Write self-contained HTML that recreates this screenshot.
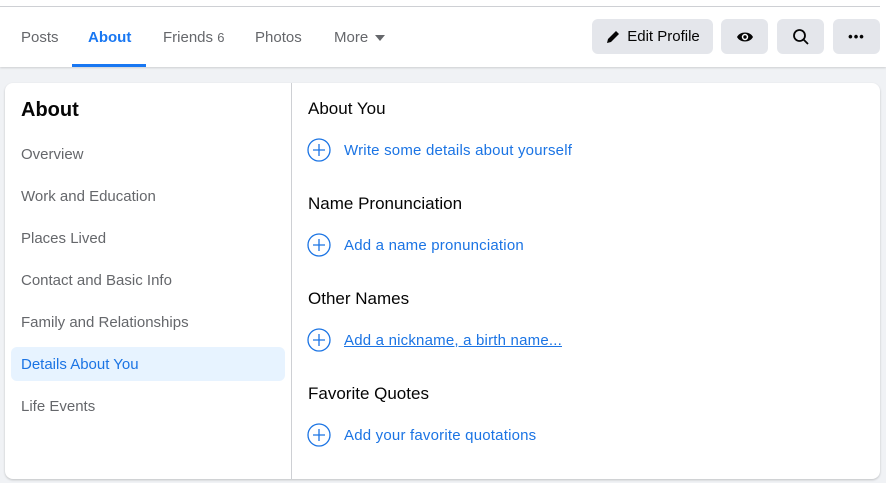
<!DOCTYPE html><html><head><style>
body{margin:0;width:886px;height:483px;background:#f0f2f5;font-family:"Liberation Sans",sans-serif;position:relative;overflow:hidden}
.hdr{position:absolute;left:0;top:0;width:886px;height:67px;background:#fff;box-shadow:0 1px 2px rgba(0,0,0,.15)}
.line{position:absolute;left:0;top:6px;width:880px;height:1px;background:#ced0d4}
.tab{position:absolute;top:29px;font-size:15px;color:#65676b}
.btn{position:absolute;top:19px;height:35px;background:#e4e6eb;border-radius:6px;display:flex;align-items:center;justify-content:center;font-size:15px;color:#050505}
.card{position:absolute;left:5px;top:83px;width:875px;height:396px;background:#fff;border-radius:8px;box-shadow:0 1px 2px rgba(0,0,0,.2)}
.div{position:absolute;left:286px;top:0;width:1px;height:396px;background:#ced0d4}
.side{position:absolute;left:16px;font-size:15px;color:#65676b;top:1px}
.h{position:absolute;left:303px;font-size:17px;color:#050505}
.lk{position:absolute;left:302px;font-size:15px;color:#1b74e4;display:flex;align-items:center;letter-spacing:.2px}
.lk svg{margin-right:13px}
</style></head><body>
<div class="hdr"><div class="line"></div>
<div class="tab" style="left:21px">Posts</div>
<div class="tab" style="left:88px;color:#1877f2;font-weight:bold">About</div>
<div style="position:absolute;left:72px;top:64px;width:74px;height:3px;background:#1877f2"></div>
<div class="tab" style="left:163px">Friends <span style="font-size:13px">6</span></div>
<div class="tab" style="left:255px">Photos</div>
<div class="tab" style="left:334px">More <svg width="12" height="8" viewBox="0 0 12 8" style="margin-left:2px"><path d="M1 1h10L6 7z" fill="#65676b"/></svg></div>
<div class="btn" style="left:592px;width:121px"><svg width="16" height="16" viewBox="0 0 16 16" style="margin-right:6px"><path d="M2 14l1-4 8-8 3 3-8 8z" fill="#050505"/></svg>Edit Profile</div>
<div class="btn" style="left:721px;width:47px"><svg width="18" height="12" viewBox="0 0 18 12"><path d="M1 6C4 0 14 0 17 6C14 12 4 12 1 6Z" fill="#050505"/><circle cx="9" cy="6" r="3.2" fill="#fff"/><circle cx="9" cy="6" r="1.7" fill="#050505"/></svg></div>
<div class="btn" style="left:777px;width:47px"><svg width="18" height="18" viewBox="0 0 18 18"><circle cx="7.5" cy="7.5" r="5.5" stroke="#050505" stroke-width="1.8" fill="none"/><path d="M11.5 11.5L16 16" stroke="#050505" stroke-width="1.8"/></svg></div>
<div class="btn" style="left:833px;width:47px;font-weight:bold;font-size:13px;letter-spacing:1px">•••</div>
</div>
<div class="card"><div class="div"></div>
<div style="position:absolute;left:16px;top:16px;font-size:20px;font-weight:bold;color:#050505">About</div>
<div class="side" style="top:63px">Overview</div>
<div class="side" style="top:105px">Work and Education</div>
<div class="side" style="top:147px">Places Lived</div>
<div class="side" style="top:189px">Contact and Basic Info</div>
<div class="side" style="top:231px">Family and Relationships</div>
<div style="position:absolute;left:6px;top:264px;width:274px;height:34px;background:#e7f3ff;border-radius:6px"></div>
<div class="side" style="top:273px;color:#1b74e4">Details About You</div>
<div class="side" style="top:315px">Life Events</div>
<div class="h" style="top:16px">About You</div>
<div class="lk" style="top:55px"><svg width="24" height="24" viewBox="0 0 24 24"><circle cx="12" cy="12" r="11" stroke="#1b74e4" stroke-width="1.3" fill="none"/><path d="M12 6v12M6 12h12" stroke="#1b74e4" stroke-width="1.3"/></svg>Write some details about yourself</div>
<div class="h" style="top:111px">Name Pronunciation</div>
<div class="lk" style="top:150px"><svg width="24" height="24" viewBox="0 0 24 24"><circle cx="12" cy="12" r="11" stroke="#1b74e4" stroke-width="1.3" fill="none"/><path d="M12 6v12M6 12h12" stroke="#1b74e4" stroke-width="1.3"/></svg>Add a name pronunciation</div>
<div class="h" style="top:206px">Other Names</div>
<div class="lk" style="top:245px"><svg width="24" height="24" viewBox="0 0 24 24"><circle cx="12" cy="12" r="11" stroke="#1b74e4" stroke-width="1.3" fill="none"/><path d="M12 6v12M6 12h12" stroke="#1b74e4" stroke-width="1.3"/></svg><span style="text-decoration:underline">Add a nickname, a birth name...</span></div>
<div class="h" style="top:301px">Favorite Quotes</div>
<div class="lk" style="top:340px"><svg width="24" height="24" viewBox="0 0 24 24"><circle cx="12" cy="12" r="11" stroke="#1b74e4" stroke-width="1.3" fill="none"/><path d="M12 6v12M6 12h12" stroke="#1b74e4" stroke-width="1.3"/></svg>Add your favorite quotations</div>
</div>
</body></html>
